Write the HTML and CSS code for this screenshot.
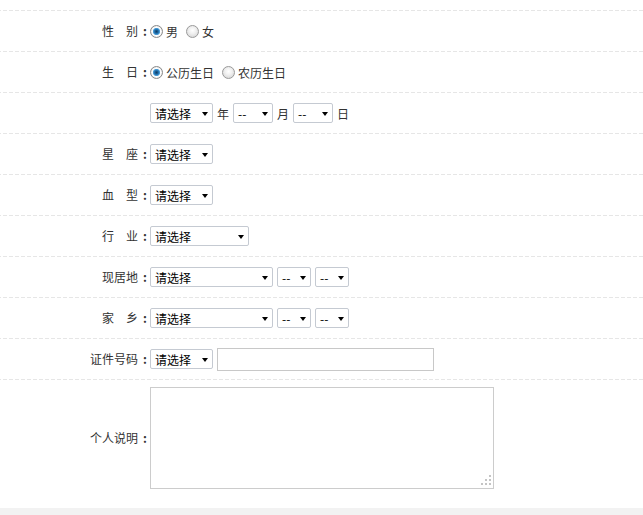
FILE: index.html
```html
<!DOCTYPE html>
<html lang="zh-CN">
<head>
<meta charset="utf-8">
<title>个人资料</title>
<link rel="stylesheet" href="styles.css">
</head>
<body>
<form class="form">
  <div class="top-line"></div>

  <div class="row">
    <span class="lbl">性　别<span class="colon">:</span></span>
    <div class="field">
      <label class="opt"><input type="radio" name="sex" class="radio" checked><span>男</span></label>
      <label class="opt"><input type="radio" name="sex" class="radio"><span>女</span></label>
    </div>
  </div>

  <div class="row">
    <span class="lbl">生　日<span class="colon">:</span></span>
    <div class="field">
      <label class="opt"><input type="radio" name="cal" class="radio" checked><span>公历生日</span></label>
      <label class="opt"><input type="radio" name="cal" class="radio"><span>农历生日</span></label>
    </div>
  </div>

  <div class="row">
    <span class="lbl"></span>
    <div class="field">
      <span class="sel w63">请选择</span><span class="unit">年</span>
      <span class="sel w40">--</span><span class="unit">月</span>
      <span class="sel w40">--</span><span class="unit">日</span>
    </div>
  </div>

  <div class="row">
    <span class="lbl">星　座<span class="colon">:</span></span>
    <div class="field"><span class="sel w63">请选择</span></div>
  </div>

  <div class="row">
    <span class="lbl">血　型<span class="colon">:</span></span>
    <div class="field"><span class="sel w63">请选择</span></div>
  </div>

  <div class="row">
    <span class="lbl">行　业<span class="colon">:</span></span>
    <div class="field"><span class="sel w99">请选择</span></div>
  </div>

  <div class="row">
    <span class="lbl">现居地<span class="colon">:</span></span>
    <div class="field gap4">
      <span class="sel w123">请选择</span>
      <span class="sel w34">--</span>
      <span class="sel w34">--</span>
    </div>
  </div>

  <div class="row">
    <span class="lbl">家　乡<span class="colon">:</span></span>
    <div class="field gap4">
      <span class="sel w123">请选择</span>
      <span class="sel w34">--</span>
      <span class="sel w34">--</span>
    </div>
  </div>

  <div class="row">
    <span class="lbl">证件号码<span class="colon">:</span></span>
    <div class="field gap4">
      <span class="sel w63">请选择</span>
      <input type="text" class="text-input">
    </div>
  </div>

  <div class="row row-area">
    <span class="lbl">个人说明<span class="colon">:</span></span>
    <div class="field">
      <div class="area-wrap">
        <textarea class="area"></textarea>
        <svg class="grip" width="11" height="11" viewBox="0 0 11 11">
          <rect x="8" y="0" width="2" height="2" fill="#c4c4c4"/>
          <rect x="4" y="4" width="2" height="2" fill="#c4c4c4"/>
          <rect x="8" y="4" width="2" height="2" fill="#c4c4c4"/>
          <rect x="0" y="8" width="2" height="2" fill="#c4c4c4"/>
          <rect x="4" y="8" width="2" height="2" fill="#c4c4c4"/>
          <rect x="8" y="8" width="2" height="2" fill="#c4c4c4"/>
        </svg>
      </div>
    </div>
  </div>

  <div class="bottom-bar"></div>
</form>
</body>
</html>
```

FILE: styles.css
```css
html, body {
  margin: 0;
  padding: 0;
  background: #fff;
}

body {
  font-family: "Noto Sans CJK SC", "Liberation Sans", sans-serif;
  font-size: 12px;
  color: #333;
}

.form {
  display: flex;
  flex-direction: column;
}

.top-line,
.row {
  background-image: linear-gradient(to right, #e6e6e6 0 1px, transparent 1px 3px, #e6e6e6 3px 6px);
  background-size: 6px 1px;
  background-repeat: repeat-x;
  background-position: left bottom;
}

.top-line {
  height: 11px;
}

.row {
  display: flex;
  align-items: center;
  height: 41px;
  box-sizing: border-box;
  padding-bottom: 1px;
}

.lbl {
  flex: 0 0 150px;
  text-align: right;
  line-height: 16px;
  white-space: nowrap;
}

.colon {
  display: inline-block;
  width: 12px;
  padding-left: 2px;
  box-sizing: border-box;
  text-align: center;
  font-weight: bold;
}

.field {
  display: flex;
  align-items: center;
}

.gap4 {
  gap: 4px;
}

.opt {
  display: flex;
  align-items: center;
  margin-right: 8px;
  color: #333;
}

.radio {
  appearance: none;
  -webkit-appearance: none;
  width: 13px;
  height: 13px;
  margin: 0 3px 0 0;
  border-radius: 50%;
  box-sizing: border-box;
  border: 1px solid #9a9a9a;
  background: radial-gradient(circle at 50% 40%, #ffffff 0, #f0f0f0 40%, #cfcfcf 100%);
}

.radio:checked {
  border-color: #8a8a8a;
  background: radial-gradient(circle at 50% 50%, #0d3e66 0, #1d5f94 1.5px, #2e86c8 2.6px, #5aa8dc 3.4px, #ffffff 3.9px, #f4f4f4 5px, #d6d6d6 6px);
}

.sel {
  position: relative;
  display: inline-flex;
  align-items: center;
  box-sizing: border-box;
  height: 20px;
  padding-left: 4px;
  border: 1px solid #c5cad2;
  border-radius: 2px;
  background: #fff;
  color: #000;
  font-size: 12px;
  white-space: nowrap;
}

.sel::after {
  content: "";
  position: absolute;
  right: 4px;
  top: 8px;
  border-left: 3.5px solid transparent;
  border-right: 3.5px solid transparent;
  border-top: 4px solid #000;
}

.w63 { width: 63px; }
.w40 { width: 40px; }
.w99 { width: 99px; }
.w123 { width: 123px; }
.w34 { width: 34px; }

.unit {
  margin: 0 4px;
  color: #333;
}

.text-input {
  box-sizing: border-box;
  width: 217px;
  height: 23px;
  margin: 0;
  border: 1px solid #c8c8c8;
  background: #fff;
  outline: none;
}

.row-area {
  height: auto;
  padding: 7px 0 19px;
  background-image: none;
}

.area-wrap {
  position: relative;
  display: flex;
}

.area {
  box-sizing: border-box;
  width: 344px;
  height: 102px;
  margin: 0;
  border: 1px solid #cccccc;
  resize: none;
  background: #fff;
  outline: none;
}

.grip {
  position: absolute;
  right: 2px;
  bottom: 3px;
}

.bottom-bar {
  height: 7px;
  background: #f2f2f2;
}
```
